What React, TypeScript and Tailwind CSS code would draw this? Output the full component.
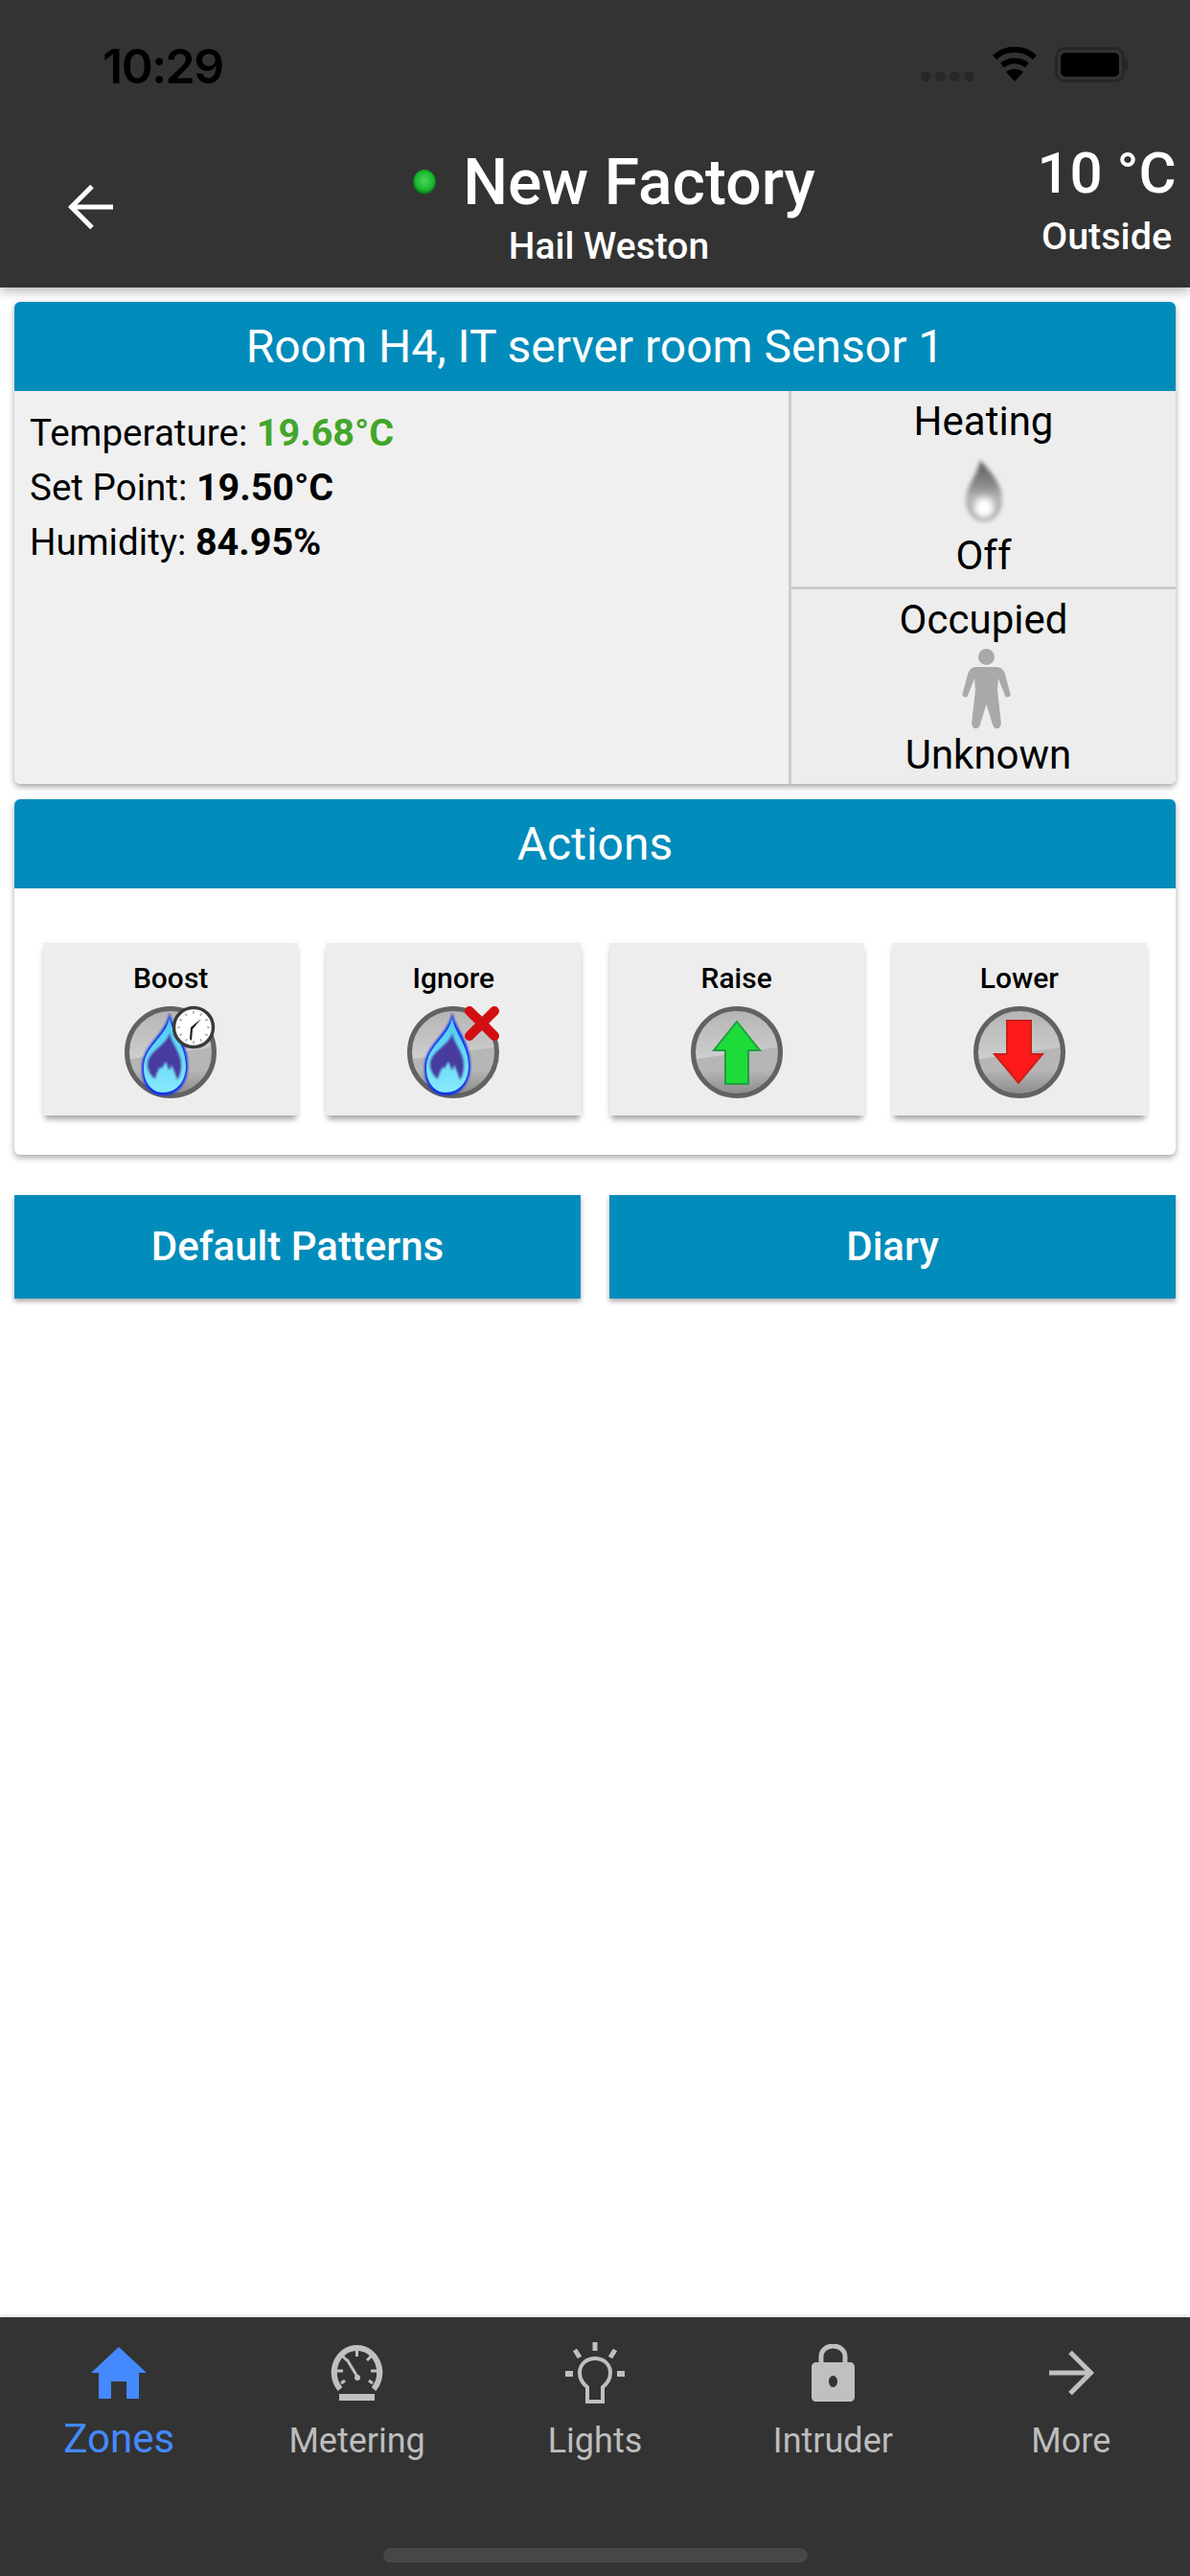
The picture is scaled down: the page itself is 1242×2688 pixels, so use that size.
import type { ReactNode } from 'react'

const font = { fontFamily: 'Roboto, "Noto Sans", sans-serif' }

function BackArrow({ color = '#fff', className = '' }: { color?: string; className?: string }) {
  return (
    <svg viewBox="0 0 48 46" className={className} fill="none" stroke={color} strokeWidth="5">
      <path d="M47 23H4" />
      <path d="M25 1.500 3.500 23 25 44.500" />
    </svg>
  )
}

function StatusBar() {
  return (
    <div className="h-[132px] relative flex items-start justify-between pl-[107px] pr-[65px] pt-[39px] shrink-0">
      <span className="text-[50px] leading-[60px] font-semibold text-black" style={{ fontFamily: 'Inter, sans-serif', letterSpacing: '-1.5px' }}>10:29</span>
      <div className="flex items-start gap-[18px] pt-[10px]">
        <div className="flex gap-[4px] pt-[26px]">
          <div className="w-[11px] h-[10px] rounded-full bg-[#272727]" />
          <div className="w-[11px] h-[10px] rounded-full bg-[#272727]" />
          <div className="w-[11px] h-[10px] rounded-full bg-[#272727]" />
          <div className="w-[11px] h-[10px] rounded-full bg-[#272727]" />
        </div>
        <svg viewBox="0 0 48 36" className="w-[48px] h-[36px]" fill="none" stroke="#000" strokeWidth="6">
          <path d="M3 11C15 0 33 0 45 11" />
          <path d="M11 19c8-6 18-6 26 0" />
          <path d="M24 36 15 26c5-4 13-4 18 0z" fill="#000" stroke="none" />
        </svg>
        <div className="flex items-center">
          <div className="w-[73px] h-[37px] rounded-[10px] border-[3px] border-[#262626] p-[3px]">
            <div className="w-full h-full rounded-[5px] bg-black" />
          </div>
          <div className="w-[3px] h-[13px] rounded-r-full bg-[#262626]" />
        </div>
      </div>
    </div>
  )
}

function Header() {
  return (
    <div className="h-[300px] bg-[#333333] flex flex-col shrink-0 relative shadow-[0_5px_10px_rgba(0,0,0,0.25)]">
      <StatusBar />
      <div className="flex text-white">
        <div className="w-[202px] pl-[71px] pt-[61px]">
          <BackArrow className="w-[48px] h-[46px]" />
        </div>
        <div className="flex-1 flex flex-col items-center pt-[21px]">
          <div className="flex items-center gap-[27px] ml-[11px] h-[76px]">
            <svg viewBox="0 0 26 28" className="w-[26px] h-[28px] -mt-[2px]">
              <defs>
                <radialGradient id="led" cx="50%" cy="45%" r="55%">
                  <stop offset="0%" stopColor="#4fd45a" />
                  <stop offset="70%" stopColor="#18b82c" />
                  <stop offset="100%" stopColor="#0d5a18" />
                </radialGradient>
              </defs>
              <ellipse cx="13" cy="14" rx="12" ry="13" fill="url(#led)" />
            </svg>
            <span className="text-[66px] leading-[76px] font-medium">New Factory</span>
          </div>
          <span className="text-[39px] leading-[44px] font-medium mt-[6px] ml-[1px]">Hail Weston</span>
        </div>
        <div className="w-[174px] flex flex-col items-center pt-[14px]">
          <span className="text-[60px] leading-[70px] font-medium whitespace-nowrap">10 °C</span>
          <span className="text-[39.500px] leading-[44px] font-medium mt-[9px]">Outside</span>
        </div>
      </div>
    </div>
  )
}

function CardTitle({ children }: { children: ReactNode }) {
  return <div className="h-[93px] bg-[#028cbb] text-white text-[48px] flex items-center justify-center">{children}</div>
}

function FlameOff() {
  return (
    <svg viewBox="0 0 44 70" className="w-[44px] h-[70px]">
      <defs>
        <linearGradient id="off" x1="0" y1="0" x2="0" y2="1">
          <stop offset="0%" stopColor="#5a5a5a" />
          <stop offset="40%" stopColor="#8a8a8a" />
          <stop offset="62%" stopColor="#b5b5b5" />
          <stop offset="100%" stopColor="#9a9a9a" />
        </linearGradient>
        <filter id="soft" x="-30%" y="-30%" width="160%" height="160%"><feGaussianBlur stdDeviation="2" /></filter>
        <filter id="softer" x="-40%" y="-40%" width="180%" height="180%"><feGaussianBlur stdDeviation="3.500" /></filter>
      </defs>
      <path d="M18 3c4 6 23 21 23 41 0 13-8 23-19 23S3 57 3 44C3 30 15 20 18 3z" fill="url(#off)" filter="url(#soft)" />
      <ellipse cx="22" cy="53" rx="11" ry="11" fill="#fff" filter="url(#softer)" />
    </svg>
  )
}

function Person() {
  return (
    <svg viewBox="0 0 51 84" className="w-[51px] h-[84px] ml-[6px]" fill="#a9a9a9">
      <circle cx="25.500" cy="8.500" r="8.500" />
      <path d="M15 19h21c4 0 7 2 8.500 6L50.500 47c.8 3-4 5-5.500 2L38 31l-1 12 3.800 34c.5 6-6 9-8.500 3L25.500 58 18.700 80c-2.500 6-9 3-8.500-3L14 43l-1-12-7 18c-1.500 3-6.300 1-5.500-2L6.500 25c1.500-4 4.500-6 8.500-6z" />
    </svg>
  )
}

function SensorCard() {
  return (
    <div className="rounded-[6px] overflow-hidden shadow-[0_3px_6px_rgba(0,0,0,0.35)]">
      <CardTitle>Room H4, IT server room Sensor 1</CardTitle>
      <div className="flex h-[410px] text-[38.600px] text-black">
        <div className="w-[808px] bg-[#f0f0f0] pl-[16px] pt-[15px] leading-[57px]">
          <div>Temperature: <b className="font-bold text-[39.500px] text-[#42a62a]">19.68°C</b></div>
          <div>Set Point: <b className="font-bold text-[39.500px]">19.50°C</b></div>
          <div>Humidity: <b className="font-bold text-[39.500px]">84.95%</b></div>
        </div>
        <div className="flex-1 bg-[#ededed] border-l-[3px] border-[#cccccc] text-[42px] leading-[47px] flex flex-col">
          <div className="h-[207px] flex flex-col items-center pt-[8px] border-b-[3px] border-[#cccccc]">
            <span>Heating</span>
            <div className="h-[70px] mt-[14px]"><FlameOff /></div>
            <span className="mt-[9px]">Off</span>
          </div>
          <div className="flex-1 flex flex-col items-center pt-[8px]">
            <span>Occupied</span>
            <div className="mt-[7px] h-[84px]"><Person /></div>
            <span className="mt-[3px] ml-[10px]">Unknown</span>
          </div>
        </div>
      </div>
    </div>
  )
}

function Dial({ id, children }: { id: string; children?: ReactNode }) {
  return (
    <svg viewBox="0 0 96 96" className="w-[96px] h-[96px] overflow-visible">
      <defs>
        <linearGradient id={`${id}-top`} x1="0" y1="0" x2="0" y2="1">
          <stop offset="0%" stopColor="#b4b4b4" />
          <stop offset="55%" stopColor="#cdcdcd" />
        </linearGradient>
        <linearGradient id={`${id}-low`} x1="0" y1="0.45" x2="0" y2="1">
          <stop offset="0%" stopColor="#b6b6b6" />
          <stop offset="100%" stopColor="#858585" />
        </linearGradient>
        <clipPath id={`${id}-clip`}><circle cx="48" cy="48" r="45" /></clipPath>
      </defs>
      <circle cx="48" cy="48" r="45" fill={`url(#${id}-top)`} />
      <path d="M0 56 96 42V96H0z" fill={`url(#${id}-low)`} clipPath={`url(#${id}-clip)`} />
      <circle cx="48" cy="48" r="45.500" fill="none" stroke="#626262" strokeWidth="5" />
      {children}
    </svg>
  )
}

function GasFlame({ id }: { id: string }) {
  return (
    <g>
      <defs>
        <filter id={`${id}-blur`} x="-30%" y="-30%" width="160%" height="160%"><feGaussianBlur stdDeviation="1.200" /></filter>
        <filter id={`${id}-glow`} x="-30%" y="-30%" width="160%" height="160%"><feGaussianBlur stdDeviation="1.100" /></filter>
        <linearGradient id={`${id}-flame`} x1="0" y1="0" x2="0" y2="1">
          <stop offset="0%" stopColor="#4ccaf5" />
          <stop offset="100%" stopColor="#86eafb" />
        </linearGradient>
      </defs>
      <path d="M47 6c2 16 19 30 19 56 0 18-10 31-26 31-14 0-22-12-22-28 0-26 25-34 29-59z" fill="#0a2ef2" filter={`url(#${id}-glow)`} />
      <path d="M47 12c2 15 17 29 17 50 0 16-9 28-24 28-12 0-20-11-20-25 0-24 23-32 27-53z" fill={`url(#${id}-flame)`} />
      <path d="M47 28c2 12 12 20 12 33 0 8-2 13-4 16-2-7-4-12-6-16-1 4-2 6-3 5-1-4-2-7-3-8-2 2-3 5-4 7-1-2-2-2-3 0-2 4-4 8-4 11-4-3-8-9-8-15 0-14 20-20 23-33z" fill="#473b9e" filter={`url(#${id}-blur)`} />
    </g>
  )
}

function Clock() {
  const ticks = Array.from({ length: 12 }, (_, i) => i * 30)
  return (
    <g transform="translate(72 22)">
      <circle r="20.500" fill="#fff" stroke="#3a3a3a" strokeWidth="3.500" />
      {ticks.map((a) => (
        <line key={a} x1="0" y1="-17" x2="0" y2="-14" stroke="#aaa" strokeWidth="1.500" transform={`rotate(${a})`} />
      ))}
      <path d="M-3 0 8-9-1 2-2 14-4 12z" fill="#1f1f1f" />
    </g>
  )
}

function RedCross() {
  return (
    <g transform="translate(78 18)">
      <path d="M-13-13 13 13M13-13-13 13" stroke="#d30e12" strokeWidth="10" strokeLinecap="round" fill="none" />
    </g>
  )
}

function ActionButton({ label, icon }: { label: string; icon: ReactNode }) {
  return (
    <div className="h-[180px] bg-[#ededed] flex flex-col items-center pt-[20px] shadow-[0_6px_6px_-2px_rgba(0,0,0,0.35),0_0_7px_rgba(0,0,0,0.06)]">
      <span className="text-[30px] leading-[34px] font-medium text-black">{label}</span>
      <div className="mt-[12px] h-[96px]">{icon}</div>
    </div>
  )
}

function ActionsCard() {
  return (
    <div className="rounded-[6px] overflow-hidden shadow-[0_3px_6px_rgba(0,0,0,0.35)] bg-white">
      <CardTitle>Actions</CardTitle>
      <div className="grid grid-cols-4 gap-[29px] px-[30px] pt-[57px] pb-[41px]">
        <ActionButton label="Boost" icon={<Dial id="boost"><GasFlame id="f1" /><Clock /></Dial>} />
        <ActionButton label="Ignore" icon={<Dial id="ignore"><GasFlame id="f2" /><RedCross /></Dial>} />
        <ActionButton
          label="Raise"
          icon={
            <Dial id="raise">
              <path d="M48 16 72 46H60V81H36V46H24z" fill="#1ddc3a" stroke="#1f9e3a" strokeWidth="2" />
            </Dial>
          }
        />
        <ActionButton
          label="Lower"
          icon={
            <Dial id="lower">
              <path d="M35 15H60V50H72L47 80 22 50H35z" fill="#ff1a1a" stroke="#c8201a" strokeWidth="2" />
            </Dial>
          }
        />
      </div>
    </div>
  )
}

function LinkButton({ label }: { label: string }) {
  return (
    <div className="h-[108px] pb-[2px] bg-[#028cbb] text-white text-[42px] font-medium flex items-center justify-center shadow-[0_3px_5px_rgba(0,0,0,0.35)]">
      {label}
    </div>
  )
}

function HomeIcon({ color }: { color: string }) {
  return (
    <svg viewBox="0 0 58 54" className="w-[58px] h-[54px]" fill={color}>
      <path fillRule="evenodd" d="M29 0 58 27H50V54H37V36H21V54H8V27H0z" />
    </svg>
  )
}

function GaugeIcon({ color }: { color: string }) {
  return (
    <svg viewBox="0 0 59 58" className="w-[59px] h-[58px]" fill="none" stroke={color}>
      <path d="M12 46C-2 29 9 3 29.500 3S61 29 47 46" strokeWidth="6" />
      <path d="M29.500 6v6M9 27h6M44 27h6M15 12l4 4M44 12l-4 4M13 40l4-3M46 40l-4-3" strokeWidth="3" />
      <path d="M19 15 30 33" strokeWidth="3" />
      <circle cx="30" cy="34" r="3" fill={color} stroke="none" />
      <rect x="11" y="51" width="37" height="7" fill={color} stroke="none" />
    </svg>
  )
}

function BulbIcon({ color }: { color: string }) {
  return (
    <svg viewBox="0 0 62 64" className="w-[62px] h-[64px]" fill="none" stroke={color}>
      <path d="M31 0v9" strokeWidth="5" />
      <path d="M10 8l5 8M52 8l-5 8" strokeWidth="5" />
      <path d="M0 33h8M54 33h8" strokeWidth="6" />
      <path d="M23 62V47c-5-4-8-9-8-15 0-9 7-15 16-15s16 6 16 15c0 6-3 11-8 15v15z" strokeWidth="4" />
    </svg>
  )
}

function LockIcon({ color }: { color: string }) {
  return (
    <svg viewBox="0 0 45 60" className="w-[45px] h-[60px]" fill="none">
      <path d="M10 22V13c0-6 5-11 12.500-11S35 7 35 13v9" stroke={color} strokeWidth="5" />
      <path fillRule="evenodd" d="M5 19H40c3 0 5 2 5 5V55c0 3-2 5-5 5H5c-3 0-5-2-5-5V24c0-3 2-5 5-5zM22.500 33a4.500 6 0 1 0 .01 0z" fill={color} />
    </svg>
  )
}

const tabs = [
  { label: 'Zones', Icon: HomeIcon, active: true },
  { label: 'Metering', Icon: GaugeIcon, active: false },
  { label: 'Lights', Icon: BulbIcon, active: false },
  { label: 'Intruder', Icon: LockIcon, active: false },
  { label: 'More', Icon: ({ color }: { color: string }) => <BackArrow color={color} className="w-[48px] h-[48px] rotate-180" />, active: false },
]

function TabBar() {
  return (
    <div className="h-[270px] bg-[#333333] flex flex-col shrink-0 shadow-[0_-2px_4px_rgba(0,0,0,0.12)]">
      <div className="grid grid-cols-5 pt-[24px]">
        {tabs.map(({ label, Icon, active }) => (
          <div key={label} className="flex flex-col items-center">
            <div className="h-[68px] flex items-center justify-center"><Icon color={active ? '#4589ff' : '#c0c0c0'} /></div>
            <span className={active ? 'text-[42px] leading-[48px] text-[#4589ff] mt-[11px]' : 'text-[36px] leading-[44px] text-[#bdbdbd] mt-[15px]'}>{label}</span>
          </div>
        ))}
      </div>
      <div className="mx-auto mt-[90px] w-[443px] h-[15px] rounded-full bg-[#474747]" />
    </div>
  )
}

export default function App() {
  return (
    <div className="min-h-[2688px] bg-white flex flex-col" style={font}>
      <Header />
      <div className="flex-1 flex flex-col px-[15px] pt-[15px]">
        <SensorCard />
        <div className="mt-[16px]"><ActionsCard /></div>
        <div className="grid grid-cols-2 gap-[30px] mt-[42px]">
          <LinkButton label="Default Patterns" />
          <LinkButton label="Diary" />
        </div>
      </div>
      <TabBar />
    </div>
  )
}
